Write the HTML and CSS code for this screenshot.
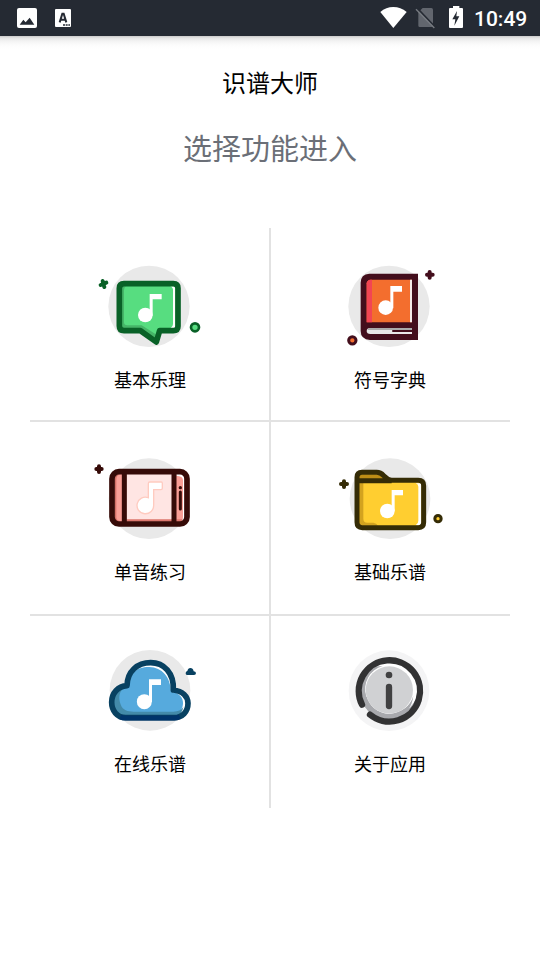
FILE: index.html
```html
<!DOCTYPE html>
<html lang="zh-CN">
<head>
<meta charset="utf-8">
<title>识谱大师</title>
<link rel="stylesheet" href="styles.css">
</head>
<body>
<header class="status">
  <svg class="status-left" viewBox="0 0 180 108" width="60" height="36">
    <rect x="51" y="24" width="60" height="60" rx="6" fill="#fff"/>
    <path d="M59 74L70 59L77 67L89 53L103 74Z" fill="#252a33"/>
    <rect x="165" y="27" width="48" height="54" rx="3" fill="#fff"/>
    <path d="M179 67L187 41H191L199 67M182 59H196" fill="none" stroke="#252a33" stroke-width="6"/>
    <path d="M189 75H195M197 75H203M205 75H210" stroke="#252a33" stroke-width="4"/>
  </svg>
  <svg class="status-right" viewBox="0 0 285 108" width="95" height="36">
    <path d="M31 36Q48 21 70 21Q92 21 110 36L70 84Z" fill="#fff"/>
    <path d="M158 24H184Q189 24 189 29V78Q189 81 185 81H149Q145 81 145 77V37Z" fill="#62666e"/>
    <path d="M143 26L197 83" stroke="#252a33" stroke-width="5"/>
    <path d="M138 28L193 84" stroke="#777b82" stroke-width="4"/>
    <path d="M249 18H268V24H276Q279 24 279 27V81Q279 84 276 84H240Q237 84 237 81V27Q237 24 240 24H249Z" fill="#fff"/>
    <path d="M261 33L247 58H256L253 77L268 49H259Z" fill="#252a33"/>
  </svg>
  <span class="clock">10:49</span>
</header>
<main>
  <h1>识谱大师</h1>
  <p class="hint">选择功能进入</p>
  <section class="menu">
    <a class="item first">
      <svg viewBox="0 0 360 300">
        <circle cx="177" cy="154" r="122" fill="#e9e9e9"/>
        <path d="M94 86H258Q264 86 264 94V218Q264 227 255 227H208L199 261L151 227H97Q88 227 88 218V94Q88 86 94 86Z" fill="#57dd80"/>
        <path d="M96 94H108Q102 97 102 106V202Q102 211 112 211H155L201 240L197 257L151 223H96Z" fill="#46b568"/>
        <path d="M240 94H256V219H242Q249 215 249 207V105Q249 97 240 94Z" fill="#fff"/>
        <path d="M102 86H250Q264 86 264 100V214Q264 227 250 227H209L199 261L151 227H102Q88 227 88 213V100Q88 86 102 86Z" fill="none" stroke="#096127" stroke-width="17" stroke-linejoin="round"/>
        <circle cx="166" cy="180" r="22" fill="#fff"/><path d="M179 117H215V133H188V182H179Z" fill="#fff"/>
        <path d="M38 78L43 96M32 90L49 83" stroke="#096127" stroke-width="12" stroke-linecap="round"/>
        <circle cx="315" cy="217" r="12" fill="#57dd80" stroke="#096127" stroke-width="8"/>
      </svg>
      <span>基本乐理</span>
    </a>
    <a class="item first">
      <svg viewBox="0 0 360 300">
        <circle cx="177" cy="154" r="122" fill="#e9e9e9"/>
        <path d="M118 56H264V255H120Q92 253 92 228V83Q92 58 118 56Z" fill="#430e1c"/>
        <path d="M120 74H246V202H110V85Q110 77 120 74Z" fill="#f36e2e"/>
        <path d="M120 74H126V202H110V85Q110 77 120 74Z" fill="#f24553"/>
        <path d="M240 74H246V202H240Z" fill="#f5eae8"/>
        <path d="M246 219H121Q110 219 110 228Q110 237 121 237H246Z" fill="#e8e8e8"/>
        <path d="M118 219H246V225H112Z" fill="#aaa"/>
        <path d="M189 228H250" stroke="#430e1c" stroke-width="6" stroke-linecap="round"/>
        <circle cx="167" cy="158" r="22" fill="#fff"/><path d="M181 93H216V110H190V160H181Z" fill="#fff"/>
        <path d="M299 51V68M291 59H308" stroke="#430e1c" stroke-width="12" stroke-linecap="round"/>
        <circle cx="67" cy="256" r="11" fill="#f36e2e" stroke="#430e1c" stroke-width="9"/>
      </svg>
      <span>符号字典</span>
    </a>
    <a class="item second">
      <svg viewBox="15 -9 360 300">
        <circle cx="192" cy="146" r="121" fill="#e9e9e9"/>
        <rect x="82" y="65" width="224" height="157" rx="18" fill="#f99e96"/>
        <path d="M89 86Q89 74 100 73H106Q94 76 94 88V202Q94 212 108 214H89Z" fill="#d47067"/>
        <rect x="124" y="72" width="137" height="143" fill="#ffe5e3"/>
        <path d="M124 208H261V215H124ZM274 208H294V215H274Z" fill="#dd776e"/>
        <path d="M274 72H288Q299 73 299 85V201Q299 211 291 214Q294 207 294 200V91Q294 78 274 77Z" fill="#fff"/>
        <rect x="81" y="65" width="225" height="157" rx="21" fill="none" stroke="#360b08" stroke-width="17"/>
        <path d="M118 70V218M267 70V218" stroke="#360b08" stroke-width="15"/>
        <path d="M286 126V177" stroke="#360b08" stroke-width="9" stroke-linecap="round"/><circle cx="286" cy="113" r="5" fill="#360b08"/>
        <path d="M194 96H229Q232 96 232 100V115Q232 119 228 119H206V165A25 25 0 1 1 190 143V101Q190 96 194 96Z" fill="#fff" stroke="#ffcbc0" stroke-width="4"/>
        <path d="M42 49V66M34 57H50" stroke="#360b08" stroke-width="12" stroke-linecap="round"/>
      </svg>
      <span>单音练习</span>
    </a>
    <a class="item second">
      <svg viewBox="0 -9 360 300">
        <circle cx="180" cy="146" r="121" fill="#e9e9e9"/>
        <path d="M81 94V76Q81 67 91 67H140Q152 67 161 77L178 93H268Q281 93 281 106V219Q281 233 267 233H95Q81 233 81 219Z" fill="#ffce30"/>
        <path d="M86 73H139Q149 73 157 80L165 88H86Z" fill="#bd8d16"/>
        <path d="M87 98H100V206Q100 218 112 218H130Q140 220 144 227H87Z" fill="#d3a31f"/>
        <path d="M257 100H274V226H257Q265 221 265 212V110Q265 102 257 100Z" fill="#fff"/>
        <path d="M81 94V82Q81 67 96 67H140Q152 67 161 77Q171 88 185 91H265Q281 91 281 107V217Q281 233 265 233H97Q81 233 81 217ZM82 92H185" fill="none" stroke="#352c06" stroke-width="15" stroke-linejoin="round"/>
        <circle cx="172" cy="183" r="22" fill="#fff"/><path d="M185 120H219V136H194V184H185Z" fill="#fff"/>
        <path d="M42 94V111M33 102H51" stroke="#352c06" stroke-width="12" stroke-linecap="round"/>
        <circle cx="324" cy="206" r="9.5" fill="#ffce30" stroke="#352c06" stroke-width="9"/>
      </svg>
      <span>基础乐谱</span>
    </a>
    <a class="item third">
      <svg viewBox="0 -3 360 300">
        <circle cx="180" cy="151" r="121" fill="#e9e9e9"/>
        <path d="M111 137C112 94 142 68 182 68C222 68 252 99 252 150C278 153 294 170 294 190C294 216 276 233 253 233H107C81 233 65 212 65 187C65 159 84 139 111 137Z" fill="#fff"/>
        <path d="M111 137C112 102 142 80 178 81C216 82 242 111 243 156C266 156 281 174 279 192C277 214 263 226 240 228H107C81 229 68 207 70 185C70 161 84 141 111 137Z" fill="#56aadd"/>
        <path d="M101 145C82 161 87 184 95 200C103 213 119 215 138 215H250C264 215 275 210 280 201C277 218 266 232 248 232H106C81 232 65 211 66 185C67 163 81 149 101 145Z" fill="#438aa9"/>
        <path d="M111 137C112 94 142 68 182 68C222 68 252 99 250 150C278 153 294 170 294 190C294 216 276 233 253 233H107C81 233 65 212 65 187C65 159 84 139 111 137Z" fill="none" stroke="#084161" stroke-width="17" stroke-linejoin="round"/>
        <path d="M91 231Q98 234 107 234H253Q262 234 269 230" fill="none" stroke="#00346a" stroke-width="15"/>
        <circle cx="163" cy="185" r="22.5" fill="#fff"/><path d="M177 118H213V135H186V186H177Z" fill="#fff"/>
        <path d="M291 105H312Q318 105 318 99Q317 94 311 94Q309 84 301 84Q294 84 292 93Q287 94 287 100Q287 105 291 105Z" fill="#084161"/>
      </svg>
      <span>在线乐谱</span>
    </a>
    <a class="item third">
      <svg viewBox="0 -3 360 300">
        <circle cx="177" cy="152" r="121" fill="#f4f4f5"/>
        <circle cx="177" cy="151" r="88" fill="#a8a9ad"/>
        <circle cx="184" cy="145" r="80" fill="#fff"/>
        <path d="M108 168A73 73 0 0 1 158 78L128 80L96 110V168Z" fill="#a8a9ad"/>
        <path d="M97 165L110 170Q124 216 178 222Q235 215 250 168Q244 218 198 236H145L112 210Z" fill="#a8a9ad"/>
        <circle cx="178" cy="150" r="71" fill="#d0d1d3"/>
        <path d="M96 194A92 92 0 1 1 120 224" fill="none" stroke="#323233" stroke-width="19" stroke-linecap="round"/>
        <circle cx="177" cy="105" r="10" fill="#414142"/><path d="M177 141V198" stroke="#414142" stroke-width="19" stroke-linecap="round"/>
      </svg>
      <span>关于应用</span>
    </a>
  </section>
</main>
</body>
</html>
```
FILE: styles.css
```css
* { box-sizing: border-box; }
body {
  margin: 0;
  height: 960px;
  background: #fff;
  color: #000;
  font-family: Roboto, "Noto Sans CJK SC", sans-serif;
}
.status {
  display: flex;
  align-items: center;
  height: 36px;
  background: #252a33;
  color: #fff;
}
.status-left { overflow: visible; }
.status-right { margin-left: 310px; }
.clock {
  margin-left: 9px;
  padding-top: 2px;
  font-size: 21px;
  line-height: 34px;
  font-weight: 500;
}
main {
  height: 924px;
  padding: 30px 30px 0;
  background: linear-gradient(#c9c9c9 0, #e5e5e5 2px, #f3f3f3 5px, #fcfcfc 9px, #fff 13px);
}
h1 {
  margin: 0;
  font-size: 24px;
  line-height: 36px;
  font-weight: 400;
  text-align: center;
}
.hint {
  margin: 27px 0 0;
  height: 99px;
  font-size: 29px;
  line-height: 42px;
  color: #6b6f77;
  text-align: center;
}
.menu {
  display: grid;
  grid-template-columns: 241px 239px;
  grid-template-rows: 194px 194px 192px;
}
.item {
  display: flex;
  flex-direction: column;
  align-items: center;
  padding-right: 1px;
  border-bottom: 2px solid #e2e2e2;
}
.item:nth-child(odd) {
  padding-right: 0;
  padding-left: 1px;
  border-right: 2px solid #e2e2e2;
}
.item svg {
  width: 120px;
  height: 100px;
  flex: none;
  overflow: visible;
}
.item span {
  margin-top: 13px;
  font-size: 18px;
  line-height: 26px;
}
.first { padding-top: 27px; }
.second { padding-top: 25px; }
.third { padding-top: 23px; border-bottom: 0; }
```
